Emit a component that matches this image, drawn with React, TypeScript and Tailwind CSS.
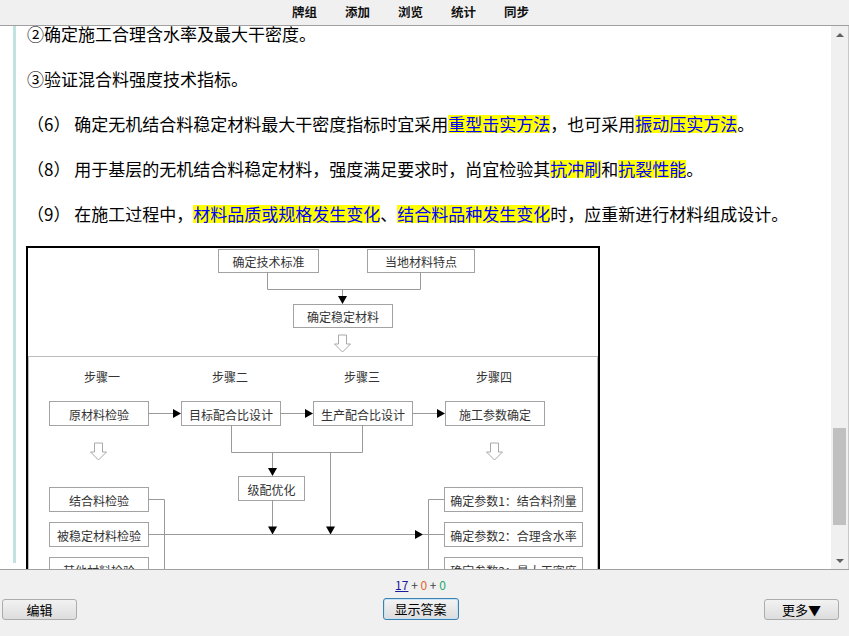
import React from 'react';

const cjk = "font-['Noto_Sans_CJK_SC','Noto_Sans',sans-serif]";

function Mark({ children }: { children: React.ReactNode }) {
  return <span className="inline-block bg-[#ffff00] leading-[18px] text-[#0000ff]">{children}</span>;
}

type BoxProps = { x: number; y: number; w: number; h?: number; label: string };

function Box({ x, y, w, h = 24, label }: BoxProps) {
  return (
    <g>
      <rect x={x + 0.5} y={y + 0.5} width={w} height={h} fill="#fff" stroke="#a3a3a3" strokeWidth={1} />
      <text
        x={x + w / 2 + 0.5}
        y={y + h / 2 + 1}
        textAnchor="middle"
        dominantBaseline="central"
        fontSize={12}
        fill="#333"
        fontFamily="'Noto Sans CJK SC', sans-serif"
      >
        {label}
      </text>
    </g>
  );
}

// filled arrow tips, (x, y) is the point
const tipRight = (x: number, y: number) => `${x},${y} ${x - 8},${y - 4.5} ${x - 8},${y + 4.5}`;
const tipDown = (x: number, y: number) => `${x},${y} ${x - 4.5},${y - 8} ${x + 4.5},${y - 8}`;

function Hollow({ x, y }: { x: number; y: number }) {
  // hollow down arrow, x = centre, y = top
  const d = `M${x - 4} ${y} H${x + 4} V${y + 9} H${x + 8} L${x} ${y + 17} L${x - 8} ${y + 9} H${x - 4} Z`;
  return <path d={d} fill="#fff" stroke="#a8a8a8" strokeWidth={1} />;
}

function Diagram() {
  const line = { stroke: '#9a9a9a', strokeWidth: 1, fill: 'none' };
  return (
    <svg width={575} height={360} className="-ml-px block">
      <rect x={1} y={1} width={572} height={420} fill="#fff" stroke="#000" strokeWidth={2} />

      <Box x={192} y={3} w={100} h={23} label="确定技术标准" />
      <Box x={341} y={3} w={107} h={23} label="当地材料特点" />
      <polyline points="241.5,26 241.5,43.5 394.5,43.5 394.5,26" {...line} />
      <line x1={316.5} y1={43.5} x2={316.5} y2={52} {...line} />
      <polygon points={tipDown(316.5, 58)} fill="#000" />
      <Box x={267} y={58} w={99} h={23} label="确定稳定材料" />
      <Hollow x={316.5} y={89} />

      <rect x={2.5} y={110.5} width={569} height={300} fill="none" stroke="#777" strokeWidth={1} strokeDasharray="1 1" />

      {[
        [76, '步骤一'],
        [204, '步骤二'],
        [336, '步骤三'],
        [468, '步骤四'],
      ].map(([cx, t]) => (
        <text
          key={t as string}
          x={cx as number}
          y={130}
          textAnchor="middle"
          dominantBaseline="central"
          fontSize={12}
          fill="#333"
          fontFamily="'Noto Sans CJK SC', sans-serif"
        >
          {t}
        </text>
      ))}

      <Box x={23} y={155} w={99} label="原材料检验" />
      <Box x={155} y={155} w={99} label="目标配合比设计" />
      <Box x={287} y={155} w={99} label="生产配合比设计" />
      <Box x={419} y={155} w={99} label="施工参数确定" />
      <line x1={122} y1={167.5} x2={148} y2={167.5} {...line} />
      <polygon points={tipRight(155, 167.5)} fill="#000" />
      <line x1={254} y1={167.5} x2={280} y2={167.5} {...line} />
      <polygon points={tipRight(287, 167.5)} fill="#000" />
      <line x1={386} y1={167.5} x2={412} y2={167.5} {...line} />
      <polygon points={tipRight(419, 167.5)} fill="#000" />

      <polyline points="205.5,179 205.5,206.5 336.5,206.5 336.5,179" {...line} />
      <line x1={246.5} y1={206.5} x2={246.5} y2={224} {...line} />
      <polygon points={tipDown(246.5, 230)} fill="#000" />
      <Box x={212} y={230} w={66} label="级配优化" />
      <line x1={246.5} y1={254} x2={246.5} y2={282} {...line} />
      <polygon points={tipDown(246.5, 288.5)} fill="#000" />
      <line x1={304.5} y1={206.5} x2={304.5} y2={282} {...line} />
      <polygon points={tipDown(304.5, 288.5)} fill="#000" />

      <Hollow x={72.5} y={197} />
      <Hollow x={468.5} y={197} />

      <Box x={23} y={241} w={99} label="结合料检验" />
      <Box x={23} y={276} w={99} label="被稳定材料检验" />
      <Box x={23} y={311} w={99} label="其他材料检验" />
      <polyline points="122,253.5 138.5,253.5 138.5,360" {...line} />
      <line x1={122} y1={288.5} x2={390} y2={288.5} {...line} />
      <polygon points={tipRight(397, 288.5)} fill="#000" />
      <line x1={397} y1={288.5} x2={418} y2={288.5} {...line} />
      <polyline points="418,253.5 402.5,253.5 402.5,360" {...line} />
      <line x1={402.5} y1={323.5} x2={418} y2={323.5} {...line} />

      <Box x={418} y={241} w={138} label="确定参数1：结合料剂量" />
      <Box x={418} y={276} w={138} label="确定参数2：合理含水率" />
      <Box x={418} y={311} w={138} label="确定参数3：最大干密度" />
    </svg>
  );
}

function Btn({ children, active }: { children: React.ReactNode; active?: boolean }) {
  return (
    <button
      type="button"
      className={
        active
          ? 'h-[22px] w-[76px] rounded-[3px] border border-[#3c7fb1] bg-gradient-to-b from-[#f4f4f4] to-[#dcdcdc] text-[13px] text-black shadow-[inset_0_0_0_1px_#c5e3f7]'
          : 'h-[21px] w-[75px] rounded-[3px] border border-[#acacac] bg-gradient-to-b from-[#f2f2f2] to-[#dddddd] text-[13px] text-black'
      }
    >
      {children}
    </button>
  );
}

export default function App() {
  const menu = ['牌组', '添加', '浏览', '统计', '同步'];

  return (
    <div className={`flex h-[636px] w-[849px] flex-col overflow-hidden bg-[#f0f0f0] ${cjk}`}>
      <header className="flex h-[26px] shrink-0 items-center justify-center gap-[28px] border-b border-[#a0a0a0] pr-[28px]">
        {menu.map((m) => (
          <span key={m} className="text-[12.5px] font-bold leading-none text-[#111]">
            {m}
          </span>
        ))}
      </header>

      <div className="flex min-h-0 flex-1">
        <div className="min-w-0 flex-1 overflow-hidden bg-white pl-[13px]">
          <div className="h-full border-l-[3px] border-[#c2e1e1] pl-[11px] text-[17px] leading-[27px] text-black">
            <p className="-mt-[6px] mb-[18px]">②确定施工合理含水率及最大干密度。</p>
            <p className="mb-[18px]">③验证混合料强度技术指标。</p>
            <p className="mb-[18px]">
              （6） 确定无机结合料稳定材料最大干密度指标时宜采用<Mark>重型击实方法</Mark>，也可采用<Mark>振动压实方法</Mark>。
            </p>
            <p className="mb-[18px]">
              （8） 用于基层的无机结合料稳定材料，强度满足要求时，尚宜检验其<Mark>抗冲刷</Mark>和<Mark>抗裂性能</Mark>。
            </p>
            <p className="mb-[19px]">
              （9） 在施工过程中，<Mark>材料品质或规格发生变化</Mark>、<Mark>结合料品种发生变化</Mark>时，应重新进行材料组成设计。
            </p>
            <Diagram />
          </div>
        </div>

        <div className="flex w-[18px] shrink-0 flex-col border-r border-[#c8c8c8] bg-[#f0f0f0]">
          <div className="flex h-[17px] items-center justify-center">
            <span className="h-0 w-0 border-x-[4px] border-b-[4px] border-x-transparent border-b-[#606060]" />
          </div>
          <div className="ml-[2px] mt-[385px] h-[97px] w-[13px] bg-[#c0c0c0]" />
          <div className="flex-1" />
          <div className="flex h-[17px] items-center justify-center">
            <span className="h-0 w-0 border-x-[4px] border-t-[4px] border-x-transparent border-t-[#606060]" />
          </div>
        </div>
      </div>

      <footer className="flex h-[67px] shrink-0 flex-col border-t border-[#a0a0a0] pl-[2px] pr-[10px]">
        <div className="mt-[8px] text-center text-[12px] leading-[14px] text-[#444]">
          <span className="text-[#1a1a9c] underline">17</span>
          <span> + </span>
          <span className="text-[#e2662a]">0</span>
          <span> + </span>
          <span className="text-[#1fa86a]">0</span>
        </div>
        <div className="mt-[6px] flex items-center justify-between">
          <Btn>编辑</Btn>
          <Btn active>显示答案</Btn>
          <Btn>更多▼</Btn>
        </div>
      </footer>
    </div>
  );
}
